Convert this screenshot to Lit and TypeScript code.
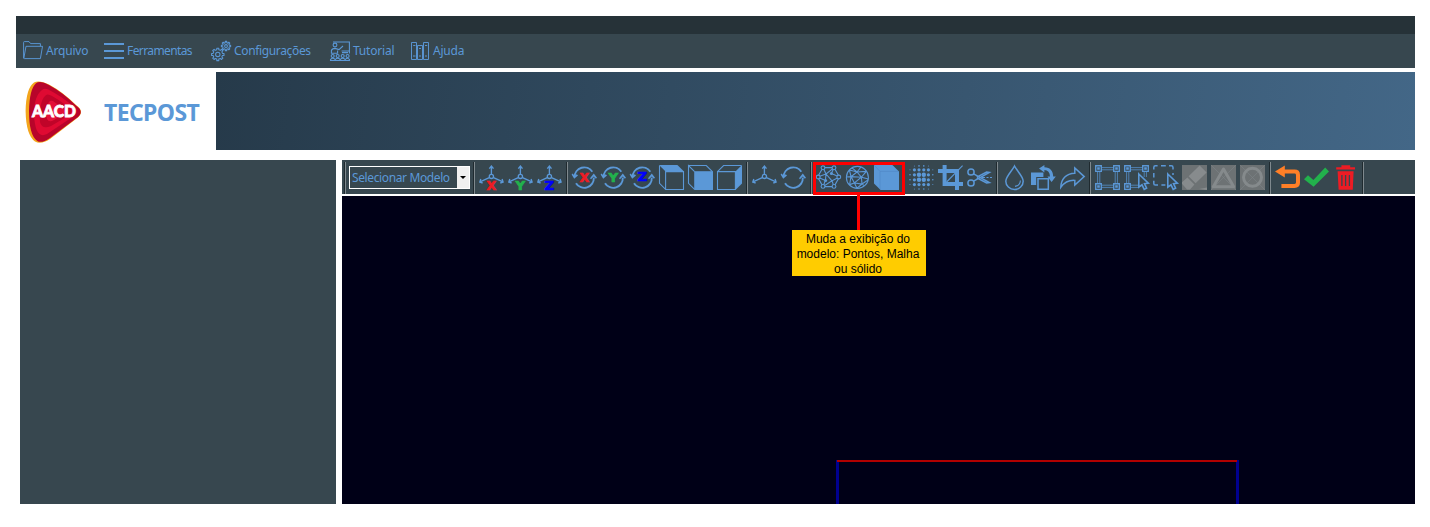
import { LitElement, html, svg, css } from "lit";
import { customElement } from "lit/decorators.js";
import { classMap } from "lit/directives/class-map.js";

const axes = svg`<g class="l a"><circle cx="12.4" cy="11.4" r="2.1"/><path d="M12.4 9V1M10.3 3.6L12.4 1l2.1 2.6M10.3 12.6L1 16.8M3.6 18L.8 17l1-3M14.5 12.6l9.4 4.2M21.3 18l2.8-1-1-3"/></g>`;
const turn = svg`<path class="l t" d="M2.6 12A9.6 9.6 0 0 1 20.3 6.8M21.8 12.6A9.6 9.6 0 0 1 4 18.2"/><path class="f" d="M-.4 9.4L2.2 13.8L6 10.6L4.8 9.2L2.6 11L.8 8.6ZM18 13.2L21.8 8.6L25 12.8L23.8 13.8L21.8 11.6L19 14.2Z"/>`;
const letter = (c: string, cls: string, y: number) =>
  svg`<text class="glyph ${cls}" x="7.6" y=${y} textLength="9.6" lengthAdjust="spacingAndGlyphs">${c}</text>`;
const gear = (cx: number, cy: number, r: number, R: number) => {
  const n = 8;
  const pts: string[] = [];
  for (let i = 0; i < n; i++) {
    const steps: [number, number][] = [[-0.27, r], [-0.2, R], [0.2, R], [0.27, r]];
    for (const [o, rad] of steps) {
      const a = ((i + o) * 2 * Math.PI) / n;
      pts.push(`${(cx + rad * Math.cos(a)).toFixed(2)} ${(cy + rad * Math.sin(a)).toFixed(2)}`);
    }
  }
  return `M${pts.join("L")}Z`;
};
const handles = (last: boolean) => svg`<g class="l dim">
  <path d="M6.5 2.6H18M6.5 4.8H18M2.6 7v11M4.8 7v11M20.2 7v${last ? 11 : 5}M22.4 7v${last ? 11 : 5}M6.5 20.2H${last ? 18 : 14}M6.5 22.4H${last ? 18 : 14}"/></g>
  <g class="l a"><path d="M.7.7h5.6v5.6H.7zM18.7.7h5.6v5.6h-5.6zM.7 18.7h5.6v5.6H.7z${last ? "M18.7 18.7h5.6v5.6h-5.6z" : ""}"/></g>
  <g class="f"><path d="M2.2 2.2h2.6v2.6H2.2zM20.2 2.2h2.6v2.6h-2.6zM2.2 20.2h2.6v2.6H2.2z${last ? "M20.2 20.2h2.6v2.6h-2.6z" : ""}"/></g>`;
const pointer = svg`<path class="cur" d="M14.8 9L24.3 18.2L20.5 18.6L22.6 23.2L20.2 24.4L18 19.8L14.8 22.2Z"/>`;

const icons: Record<string, unknown> = {
  axisX: svg`${axes}${letter("X", "red", 24.6)}`,
  axisY: svg`${axes}${letter("Y", "green", 24.6)}`,
  axisZ: svg`${axes}${letter("Z", "blue", 24.6)}`,
  turnX: svg`${turn}${letter("X", "red", 16.8)}`,
  turnY: svg`${turn}${letter("Y", "green", 16.8)}`,
  turnZ: svg`${turn}${letter("Z", "blue", 16.4)}`,
  cubeTop: svg`<path class="f" d="M0 0H18.4L25 6.6H6.6Z"/><path class="l" d="M.5.5V18.3L6.6 24.4M6.6 6.6H24.5V24.5H6.6Z"/>`,
  cubeFront: svg`<path class="f" d="M6.2 6.2H25V25H6.2Z"/><path class="l" d="M6.6 6.6L.5.5V18.3L6.6 24.4M.5.5H18.3L24.4 6.6"/>`,
  cubeSide: svg`<path class="f" d="M18.4 6.6L25 0V18.4L18.4 25Z"/><path class="l" d="M18.4 6.6H.5V24.5H18.4ZM.5 6.6L6.6.5H24.5"/>`,
  axes,
  turn,
  points: svg`<g class="l"><path d="M7 2.6H18L23.4 12L18 21.6H7L1.6 12ZM7 2.6L10 9L1.6 12L9.4 15.5L7 21.6M18 2.6L15.4 8.5L23.4 12L16 15.8L18 21.6M10 9L18 2.6M7 21.6L16 15.8M10 9L9.4 15.5M10 9L16 15.8"/></g><g class="l bg"><circle cx="7" cy="2.8" r="1.9"/><circle cx="18" cy="2.8" r="1.9"/><circle cx="22.8" cy="12" r="1.9"/><circle cx="18" cy="21.4" r="1.9"/><circle cx="7" cy="21.4" r="1.9"/><circle cx="2.2" cy="12" r="1.9"/></g><circle class="f" cx="15.4" cy="8.5" r="1.5"/><circle class="f" cx="9.6" cy="15.4" r="1.5"/>`,
  mesh: svg`<g class="l"><circle cx="12.4" cy="12.4" r="11"/><path d="M7 2.8L12 7L21.4 6.4M16 2L12 7L4.4 5M12 7L6 11.6L1.6 12M12 7L16.4 12.2L6 11.6L9.4 18L16.4 12.2L21.4 6.4M16.4 12.2L23.4 14M16.4 12.2L17 19L9.4 18L12 23.2M9.4 18L4.6 19.6L6 11.6L4.4 5M17 19L12 23.2M17 19L23 15M17 19L19.4 20.6"/></g>`,
  solid: svg`<path class="f" d="M0 0H18.4L25 6.6V25H6.6L0 18.4Z"/><path class="edge" d="M0 0L6 6.4H24.5M6 6.4V24"/>`,
  dots: svg`<g class="f">${[1, 5.4, 10, 14.8, 19.4, 23.8].map((x, i) =>
    [0.9, 4.8, 9.8, 14.8, 19.6, 24].map((y, j) => {
      const e = Math.min(i, 5 - i), k = Math.min(j, 5 - j);
      return e + k === 0 ? "" : svg`<circle cx=${x} cy=${y} r=${e === 0 || k === 0 ? (e + k === 1 ? 0.5 : 0.8) : e + k === 4 ? 2.2 : 1.6}/>`;
    }))}</g>`,
  crop: svg`<path class="f" d="M4.6 0H8.6V17H25V21H4.6ZM0 4H21V25H17V8H0Z"/><path class="l" d="M8.6 17L24.6.6"/>`,
  cut: svg`<g class="l w"><circle cx="4" cy="7" r="3.1"/><circle cx="4" cy="18" r="3.1"/><path d="M6.6 8.8L22.4 17.6L19.6 18L9.8 12.8M6.6 16.2L22.4 7.4L19.6 7L9.8 12.2"/></g><path class="l" d="M15 12.5h3M19.5 12.5h2M23 12.5h2"/>`,
  drop: svg`<path class="l w" d="M12.5 1C10 6 3.8 11.4 3.8 16.2A8.7 8.3 0 0 0 21.2 16.2C21.2 11.4 15 6 12.5 1Z"/><path class="l" d="M18.4 15.4Q18.2 20.4 13 21.4"/>`,
  swap: svg`<path class="f" d="M0 7.5H12.4V12H5.2V20H0Z"/><path class="l w" d="M7 13.8H17.3V24.2H7Z"/><path class="f" d="M8 3.6L13.4 0V2.3C19.5 2.6 22 6 22.2 11.4H24.8L20.6 17L16.4 11.4H19C18.8 7.4 17 5.3 13.4 5V7.4Z"/>`,
  forward: svg`<path class="l w" d="M.8 22.4C1 14 6 8.4 14.8 8.2V3L24.2 11.6L14.8 20V15.4C8.4 15 4.6 17 .8 22.4Z"/>`,
  box: handles(true),
  boxPick: svg`${handles(false)}${pointer}`,
  dashPick: svg`<path class="l w" d="M.8 4.4V2.4Q.8.8 2.4.8H4.6M8 .8H12.8M16 .8H18.4Q20 .8 20 2.4V4.6M20 8V10M.8 8V12.6M.8 15.8V18.4Q.8 20 2.4 20H5M8.4 20H12.4"/>${pointer}`,
  erase: svg`<path class="tile" d="M0 0H25V25H0Z"/><path class="gf" d="M17.6.4L24.6 7.4L13.6 18.2L6.6 11.2ZM5.4 12.4L12.4 19.4L8 24.4H5L0 18.8V17.2ZM17 24L25 22.6V25Z"/>`,
  triangle: svg`<path class="tile" d="M0 0H25V25H0Z"/><path class="gt" d="M0 0L25 25M25 0L0 25"/><path class="gl" d="M12.5 4L22.7 21.8H2.3Z"/>`,
  circle: svg`<path class="tile" d="M0 0H25V25H0Z"/><path class="gt" d="M0 0L25 25M25 0L0 25"/><circle class="gl" cx="12.5" cy="12.3" r="9"/>`,
  undo: svg`<path class="back" d="M7 6.6H19.5Q23 6.6 23 10V17.6Q23 20.9 19.5 20.9H6.4"/><path class="orange" d="M0 6.6L9.8 .6V12.6Z"/>`,
  check: svg`<path class="green" d="M0 14.2L4 10.2L9.4 15L21.2 2.6L25 6.4L9.6 21.8Z"/>`,
  trash: svg`<path class="red" d="M3.2 4.6V2.2H8.4V.2H17.2V2.2H22V4.6ZM4.6 6.3H20.6L19.8 24.8H5.6Z"/><path class="slot" d="M8.9 10V21M12.6 10V21M16.4 10V21"/>`,

  folder: svg`<path class="l thin" d="M.6 17.2V1.4Q.6.6 1.4.6H6L7.6 2.6H17.4V5.2M.8 17.4L3 5.3H19.5L17.4 17.6H1.3Z"/>`,
  lines: svg`<path class="bars" d="M0 3H20M0 10H20M0 17H20"/>`,
  gears: svg`<g class="l gear"><circle cx="6.8" cy="13.4" r="2.2"/><path d=${gear(6.8, 13.4, 4.8, 6.3)}/><circle cx="15" cy="5" r="1.4"/><path d=${gear(15, 5, 3.4, 4.7)}/></g>`,
  lesson: svg`<g class="l"><path d="M3 1H19.4V12.4M12 11.6H18M11.6 10H19M1.4 12.4V9.5Q2 7.4 5 7.4L9 8.6L13 5M1 12.2H7.6V9.6"/><circle cx="5" cy="4" r="1.9"/><circle cx="2.7" cy="15" r="1.5"/><circle cx="7.7" cy="15" r="1.5"/><circle cx="12.7" cy="15" r="1.5"/><circle cx="17.6" cy="15" r="1.5"/><path d="M.5 20V18.6Q2.7 16 5.2 18.6Q7.7 16 10.2 18.6Q12.7 16 15.2 18.6Q17.6 16 19.5 18.6V20M.4 19.5H19.7"/></g>`,
  books: svg`<g class="l thin"><path d="M.5 1.5H5.5V18.5H.5ZM6.5 4.5H11.5V18.5H6.5ZM12.5 1.5H17.5V18.5H12.5ZM2 15H4.5M14 15H16M8 15H10M2.2 4.5H4.4M14 4.5H16.2M8 7.5H10"/></g>`,
};

@customElement("ui-icon")
class UiIcon extends LitElement {
  static properties = { name: {}, size: { type: Number } };
  declare name: string;
  declare size: number;
  static styles = css`
    :host { display: block; flex: none; }
    svg { display: block; overflow: visible; }
    .f { fill: #5b98d7; }
    .l { fill: none; stroke: #5b98d7; stroke-width: 1.1; }
    .a { stroke-width: 1.35; }
    .t { stroke-width: 1.9; }
    .w { stroke-width: 1.5; }
    .thin { stroke-width: 0.95; }
    .gear { stroke-width: 1.05; stroke-linejoin: round; }
    .bg { fill: #37474f; }
    .dim { opacity: 0.8; stroke-width: 0.9; }
    .cur { fill: #37474f; stroke: #5b98d7; stroke-width: 1.6; }
    .edge { fill: none; stroke: #4d87c4; stroke-width: 0.6; }
    .glyph { font: bold 11.5px "DejaVu Sans", sans-serif; stroke-width: 0.7; }
    .red { fill: #ed1c24; } text.red { stroke: #ed1c24; }
    .green { fill: #22b14c; } text.green { stroke: #22b14c; }
    .blue { fill: #0000ff; } text.blue { stroke: #0000ff; }
    .orange { fill: #ff7f27; }
    .back { fill: none; stroke: #ff7f27; stroke-width: 4; }
    .slot { stroke: #37474f; stroke-width: 1.3; }
    .tile { fill: #6d7274; }
    .gf { fill: #878b8d; }
    .gl { fill: none; stroke: #858a8c; stroke-width: 3; stroke-linejoin: round; }
    .gt { stroke: #81878a; stroke-width: 0.5; }
    .bars { stroke: #5b98d7; stroke-width: 1.8; }
  `;
  render() {
    return html`<svg width=${this.size} height=${this.size} viewBox="0 0 ${this.size} ${this.size}">${icons[this.name]}</svg>`;
  }
}

const menu = [
  ["folder", "Arquivo", "m1"], ["lines", "Ferramentas", "m2"], ["gears", "Configurações", "m3"],
  ["lesson", "Tutorial", "m4"], ["books", "Ajuda", "m5"],
];
const groups = [
  ["axisX", "axisY", "axisZ"],
  ["turnX", "turnY", "turnZ", "cubeTop", "cubeFront", "cubeSide"],
  ["axes", "turn"],
  ["points", "mesh", "solid"],
  ["dots", "crop", "cut"],
  ["drop", "swap", "forward"],
  ["box", "boxPick", "dashPick", "erase", "triangle", "circle"],
  ["undo", "check", "trash"],
];

@customElement("app-root")
class AppRoot extends LitElement {
  static styles = css`
    :host { display: block; width: 1430px; height: 527px; box-sizing: border-box; padding: 16px 15px 0 16px; background: #fff; overflow: hidden; font-family: "Noto Sans", sans-serif; }
    .title { height: 18px; background: #263238; }
    .menu { height: 34px; display: flex; align-items: center; padding-left: 7px; box-sizing: border-box; background: #37474f; color: #5b98d7; font-size: 12px; }
    .item { display: flex; align-items: center; gap: 3px; white-space: nowrap; line-height: 16px; flex: none; }
    .m1 { width: 81px; letter-spacing: -0.2px; }
    .m2 { width: 107px; letter-spacing: -0.6px; }
    .m3 { width: 119px; letter-spacing: -0.35px; }
    .m4 { width: 81px; letter-spacing: -0.2px; }
    .m5 { gap: 2px; letter-spacing: -0.2px; }
    .head { display: flex; height: 78px; margin-top: 4px; }
    .brand { width: 200px; display: flex; align-items: center; }
    .logo { display: block; margin: 1px 0 0 9px; flex: none; }
    .logo text { font: 900 16px Lato, sans-serif; fill: #fff; }
    .name { margin: 1px 0 0 19px; font: bold 23px/30px "Noto Sans", sans-serif; letter-spacing: -0.6px; color: #5b98d7; }
    .banner { flex: 1; background: linear-gradient(98deg, #263a4a, #436787); }
    .body { display: flex; gap: 6px; margin: 10px 0 0 4px; height: 344px; }
    .side { width: 316px; background: #37474f; }
    .main { flex: 1; display: flex; flex-direction: column; gap: 2px; }
    .tools { height: 34px; display: flex; align-items: center; gap: 4px; padding-left: 2px; background: #37474f; box-sizing: border-box; position: relative; }
    .sep { width: 2px; height: 32px; margin-top: 2px; flex: none; background: linear-gradient(90deg, #1f2a2f 50%, #7f898e 50%); }
    .combo { width: 121px; height: 23px; margin: 1px -1px 0 -1px; flex: none; box-sizing: border-box; border: 1px solid #fff; display: flex; color: #5b98d7; font-size: 12px; line-height: 21px; letter-spacing: -0.38px; }
    .value { flex: 1; padding-left: 2px; white-space: nowrap; }
    .drop { width: 12px; background: #f0f0f0; display: flex; align-items: center; justify-content: center; }
    .arrow { border: solid transparent; border-width: 3px 3px 0; border-top-color: #000; }
    .view { flex: 1; background: #000017; position: relative; }
    .frame { position: absolute; left: 494px; top: 264px; width: 397px; height: 44px; border: solid #00008f; border-width: 0 3px; }
    .edge { height: 2px; margin: 0 -1px 0 -2px; background: #b00000; }
    .mark { position: absolute; left: 471px; top: 2px; width: 92px; height: 33px; box-sizing: border-box; border: 3px solid #f00; z-index: 2; }
    .stem { position: absolute; left: 515px; top: 35px; width: 3px; height: 35px; background: #f00; z-index: 2; }
    .note { position: absolute; left: 450px; top: 70px; width: 134px; height: 46px; background: #fc0; color: #000; font: 12px/15px "Liberation Sans", sans-serif; text-align: center; z-index: 2; padding: 2px 2px 0 0; box-sizing: border-box; white-space: pre-line; }
  `;
  render() {
    return html`
      <div class="title"></div>
      <nav class="menu">${menu.map(([i, t, c]) => html`<div class=${classMap({ item: true, [c]: true })}><ui-icon name=${i} size="20"></ui-icon><span>${t}</span></div>`)}</nav>
      <header class="head">
        <div class="brand">
          <svg class="logo" width="60" height="64" viewBox="0 0 60 64">
            <path fill="#f3a51c" d="M9 2.5Q1 8 .6 31Q1 55 10 61.5Q16 65 25 59L51 39Q61 32 51 25Q38 12 24 4.5Q14-.5 9 2.5Z"/>
            <path fill="#b8042a" d="M11 3.3Q4.5 9 4 31Q4 55 12 60.7Q16 64 25 58L51 38.5Q60.5 32 51 25.5Q38 12.5 24 5Q15 0 11 3.3Z"/>
            <path fill="#df0a32" d="M17 10Q9 16 9 34Q10 60 22 54L46 38Q57 31 47 25Q34 15 26 11Q20 7 17 10Z"/>
            <path fill="#c00429" d="M20 16Q14 22 15 42Q17 50 26 46L43 36Q50 31 42 26Q31 18 27 16Q22 13 20 16Z"/>
            <path fill="#e21038" d="M24 22Q19 28 22 39Q24 43 29 40L38 34Q42 31 37 28Q31 23 28 21Q25 20 24 22Z"/>
            <text x="7" y="37" textLength="44" lengthAdjust="spacingAndGlyphs" stroke="#fff" stroke-width=".8">AACD</text>
          </svg>
          <div class="name">TECPOST</div>
        </div>
        <div class="banner"></div>
      </header>
      <div class="body">
        <aside class="side"></aside>
        <section class="main">
          <div class="tools">
            <i class="sep"></i>
            <div class="combo"><span class="value">Selecionar Modelo</span><span class="drop"><i class="arrow"></i></span></div>
            <i class="sep"></i>
            ${groups.map((g) => html`${g.map((n) => html`<ui-icon name=${n} size="25"></ui-icon>`)}<i class="sep"></i>`)}
            <div class="mark"></div>
            <div class="stem"></div>
            <div class="note">Muda a exibição do
modelo: Pontos, Malha
ou sólido</div>
          </div>
          <div class="view"><div class="frame"><div class="edge"></div></div></div>
        </section>
      </div>`;
  }
}
